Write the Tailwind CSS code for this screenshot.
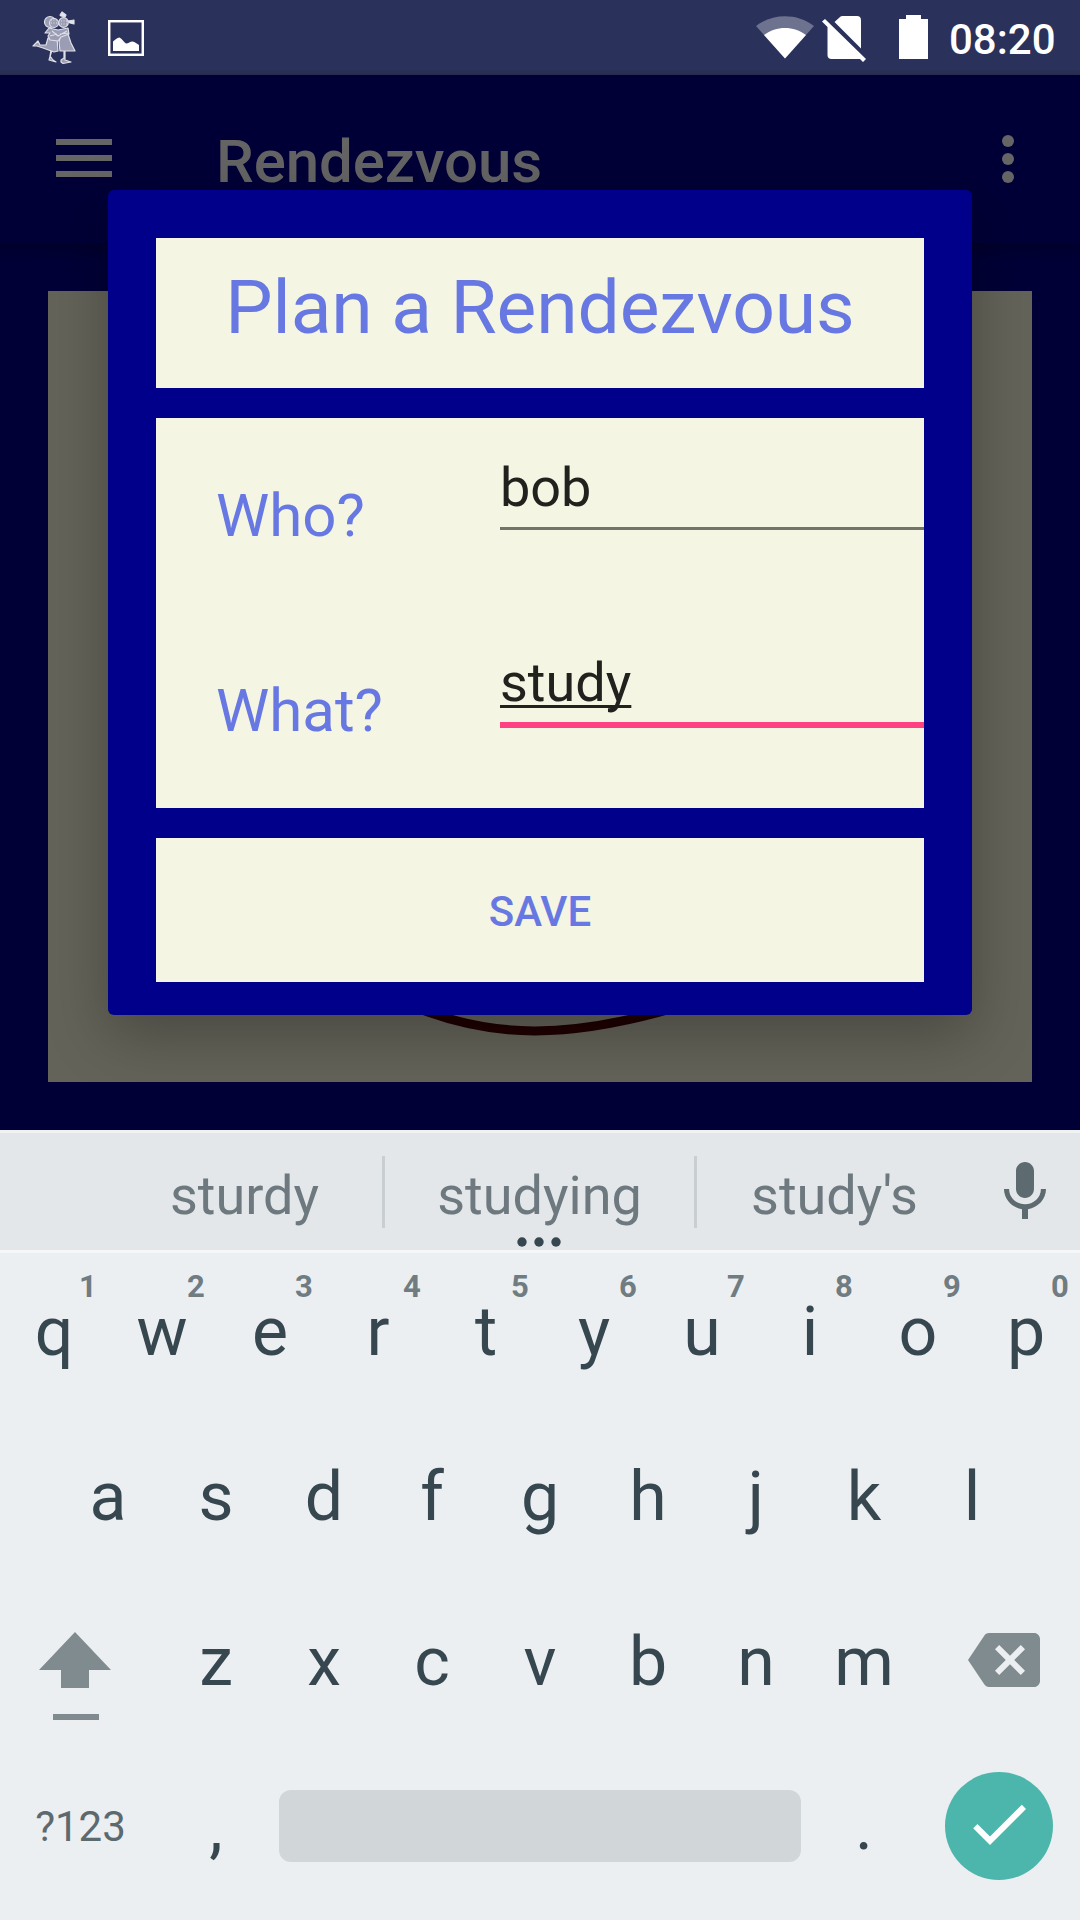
<!DOCTYPE html>
<html lang="en">
<head>
  <meta charset="UTF-8" />
  <meta name="viewport" content="width=device-width, initial-scale=1" />
  <title>Rendezvous</title>
  <script src="https://cdn.jsdelivr.net/npm/@tailwindcss/browser@4"></script>
</head>
<body class="bg-[#000037] font-['Roboto',sans-serif]">
  <div class="relative flex h-[1920px] w-[1080px] flex-col overflow-hidden">

    <!-- Status bar -->
    <header class="flex h-[75px] shrink-0 items-start bg-[#2a315b] bg-linear-to-b from-[#2a315b] from-92% to-[#262c4e] text-white">
      <svg class="ml-[30px] mt-[9px] h-[57px] w-[48px]" viewBox="30 9 48 57" fill="#9a9db4" stroke="#dfe0e8" stroke-width="1.200" stroke-linejoin="round">
        <path d="M51 50 50 56 53 60 56 62 49 60 52 50Z" />
        <path d="M48 38 57 38 58 51 54 52 43 48 37 46 33 46 38 41 40 45 46 45Z" />
        <path d="M65 50 65 60 71 62 63 63.500 61 62 61 60 64 58 64 50Z" />
        <path d="M61 33 68 34 71 43 75 51 60 51 59 42Z" />
        <path d="M49 28 58 30 68 28 69 34 61 37 58 41 50 40 48 36 50 33 45 33Z" />
        <path fill="none" d="M52 31 58 36 67 31M50 36 57 34M60 34 69 33" />
        <circle cx="50" cy="22" r="5.500" />
        <circle cx="54" cy="23" r="4.500" />
        <circle cx="63.500" cy="22.500" r="4.800" />
        <path fill="none" stroke-dasharray="1 1.500" d="M51 20H57M51 23H57M61 21H67M61 24H67" />
        <path fill="#e4e5ec" d="M60 15 62 12 66 15 65 17 61 16ZM68 21 74 20 74 24 70 23Z" />
      </svg>
      <svg class="ml-[30px] mt-[20px] size-9" viewBox="0 0 36 36">
        <rect x="1.200" y="1.200" width="33.600" height="33.600" fill="none" stroke="#fff" stroke-width="2.500" />
        <path fill="#fff" d="M5 31V21.500C7 20 9 17.500 11.500 17.500C14 18.500 16 22.500 18 23.500C20.500 23.500 22 21.500 24.500 21.500C27 22 29 24 31 25V31Z" />
      </svg>
      <svg class="ml-[612px] mt-[15px] h-[44px] w-[58px]" viewBox="0 0 58 44">
        <path fill="#6d728e" d="M0 11C17-2 41-2 58 11L29 43.500Z" />
        <path fill="#fff" d="M8 20C20 10.500 38 10.500 50 20L29 43.500Z" />
      </svg>
      <svg class="ml-[8px] mt-[15px] h-[48px] w-[44px]" viewBox="0 0 44 48">
        <path fill="#fff" d="M12.500 7 18 2C18.600 1.400 19.400 1 20.500 1H35C37.500 1 39 2.500 39 5V33.500Z" />
        <path fill="#fff" d="M3 4 44 44 41 47 38 44H9.500C7 44 5.500 42.500 5.500 40V12L0 6.500Z" />
      </svg>
      <svg class="ml-[33px] mt-[15px] h-[44px] w-[29px]" viewBox="0 0 29 44">
        <path fill="#fff" d="M7 0H22V4H29V44H0V4H7Z" />
      </svg>
      <span class="ml-[21px] mt-[15px] text-[42px] leading-[49px] font-medium">08:20</span>
    </header>

    <!-- App behind the dialog -->
    <div class="flex h-[168px] shrink-0 items-start text-[#646464]">
      <svg class="ml-14 mt-[64px] h-[38px] w-14" viewBox="0 0 56 38" fill="#656565">
        <path d="M0 0H56V6H0ZM0 16H56V22H0ZM0 32H56V38H0Z" />
      </svg>
      <h1 class="ml-[104px] mt-[52px] text-[60px] leading-[70px] font-medium tracking-[-0.1px]">Rendezvous</h1>
      <svg class="ml-auto mr-[66px] mt-[60px] h-12 w-3" viewBox="0 0 12 48" fill="#656565">
        <circle cx="6" cy="6" r="6" />
        <circle cx="6" cy="24" r="6" />
        <circle cx="6" cy="42" r="6" />
      </svg>
    </div>
    <main class="h-[887px] shrink-0 bg-linear-to-b from-[#00002c] to-[#000037] to-2% px-12 pt-12">
      <div class="flex h-[791px] items-end justify-center bg-[#636359]">
        <svg class="h-[91px] w-full" viewBox="48 991 984 91" fill="none">
          <path stroke="#1f0000" stroke-width="9" d="M405 1003C490 1040 570 1040 688 1004" />
        </svg>
      </div>
    </main>

    <!-- Dialog -->
    <section class="absolute left-[108px] top-[190px] flex h-[825px] w-[864px] flex-col gap-[30px] rounded-[6px] bg-[#00008b] px-12 pt-12 text-[#6778e3] shadow-[0_20px_60px_rgba(0,0,0,0.27)]">
      <h2 class="h-[150px] bg-[#f4f5e3] pt-[25px] text-center text-[75px] leading-[88px] tracking-[-0.1px]">Plan a Rendezvous</h2>
      <div class="h-[390px] bg-[#f4f5e3]">
        <div class="flex h-[195px]">
          <label class="w-[344px] pt-[63px] pl-[60px] text-[60px] leading-[70px]">Who?</label>
          <div class="h-[112px] flex-1 border-b-3 border-[#737369] pt-[38px] text-[54px] leading-[63px] text-[#21211e]">bob</div>
        </div>
        <div class="flex h-[195px]">
          <label class="w-[344px] pt-[63px] pl-[60px] text-[60px] leading-[70px]">What?</label>
          <div class="h-[115px] flex-1 border-b-6 border-[#ff4081] pt-[38px] text-[54px] leading-[63px] text-[#21211e]"><span class="underline decoration-3 underline-offset-4 [text-decoration-skip-ink:none]">study</span></div>
        </div>
      </div>
      <button class="h-[144px] bg-[#f4f5e3] pt-[3px] text-[42px] leading-[49px] font-medium">SAVE</button>
    </section>

    <!-- Keyboard -->
    <section class="flex h-[790px] shrink-0 flex-col bg-[#eceff1] text-[#37474f]">
      <div class="relative flex h-[123px] items-center border-y-3 border-t-[#eff1f3] border-b-[#f5f7f8] bg-[#e3e7e9] text-center text-[54px] leading-[63px] text-[#6d797f]">
        <span class="w-[382px] pt-2 pl-[107px]">sturdy</span>
        <i class="h-[72px] w-[3px] bg-[#c9ced1]"></i>
        <span class="w-[309px] pt-2">studying</span>
        <i class="h-[72px] w-[3px] bg-[#c9ced1]"></i>
        <span class="w-[275px] pt-2">study's</span>
        <svg class="ml-[17px] size-[72px]" viewBox="0 0 24 24" fill="#5d6a70">
          <path d="M12 14c1.660 0 2.990-1.340 2.990-3L15 5c0-1.660-1.340-3-3-3S9 3.340 9 5v6c0 1.660 1.340 3 3 3zm5.300-3c0 3-2.540 5.100-5.300 5.100S6.700 14 6.700 11H5c0 3.410 2.720 6.230 6 6.720V21h2v-3.280c3.280-.480 6-3.300 6-6.720h-1.700z" />
        </svg>
        <svg class="absolute left-[517px] top-[104px] h-[10px] w-[44px]" viewBox="0 0 44 10" fill="#37474f">
          <circle cx="5" cy="5" r="4.700" />
          <circle cx="22" cy="5" r="4.700" />
          <circle cx="39" cy="5" r="4.700" />
        </svg>
      </div>
      <div id="row1" class="flex h-[165px] pt-[39px]"></div>
      <div id="row2" class="flex h-[165px] px-[54px] pt-[39px]"></div>
      <div class="flex h-[165px]">
        <svg class="h-[165px] w-[162px]" viewBox="0 1583 162 165" fill="#808b90">
          <path d="M75 1632 111 1670H89V1688H61V1670H39ZM53 1714H99V1720H53Z" />
        </svg>
        <div id="row3" class="flex pt-[39px]"></div>
        <svg class="mt-[41px] ml-[50px] size-[72px]" viewBox="0 0 24 24" fill="#808b90">
          <path d="M22 3H7c-.690 0-1.230.350-1.590.880L0 12l5.410 8.110c.360.530.900.890 1.590.890h15c1.100 0 2-.900 2-2V5c0-1.100-.900-2-2-2zm-3 12.590L17.590 17 14 13.410 10.410 17 9 15.590 12.590 12 9 8.410 10.410 7 14 10.590 17.590 7 19 8.410 15.410 12 19 15.590z" />
        </svg>
      </div>
      <div class="flex h-[172px] items-start">
        <span class="w-[161px] pt-[54px] text-center text-[42px] leading-[49px] text-[#5c6a70]">?123</span>
        <span class="ml-px w-[108px] pt-[39px] text-center text-[68px] leading-[80px]">,</span>
        <div class="mt-[42px] ml-[9px] h-[72px] w-[522px] rounded-xl bg-[#d1d6d9]"></div>
        <span class="ml-[9px] w-[108px] pt-[38px] text-center text-[68px] leading-[80px]">.</span>
        <div class="mt-[24px] ml-[27px] flex size-[108px] justify-center rounded-full bg-[#4db6ac]">
          <svg class="mt-4 size-[72px]" viewBox="0 0 24 24" fill="#fff">
            <path d="M9 16.200L4.800 12l-1.400 1.400L9 19 21 7l-1.400-1.400z" />
          </svg>
        </div>
      </div>
    </section>
  </div>

  <script>
    function addKeys(id, letters, hints) {
      const row = document.getElementById(id);
      letters.split('').forEach((letter, i) => {
        const key = document.createElement('div');
        key.className = 'relative w-[108px] text-center text-[68px] leading-[80px]';
        key.textContent = letter;
        if (hints) {
          const hint = document.createElement('span');
          hint.className = 'absolute -top-[23px] left-[74px] w-7 text-[31px] leading-[36px] font-bold text-[#6f7c82]';
          hint.textContent = hints[i];
          key.appendChild(hint);
        }
        row.appendChild(key);
      });
    }

    addKeys('row1', 'qwertyuiop', '1234567890');
    addKeys('row2', 'asdfghjkl');
    addKeys('row3', 'zxcvbnm');
  </script>
</body>
</html>
